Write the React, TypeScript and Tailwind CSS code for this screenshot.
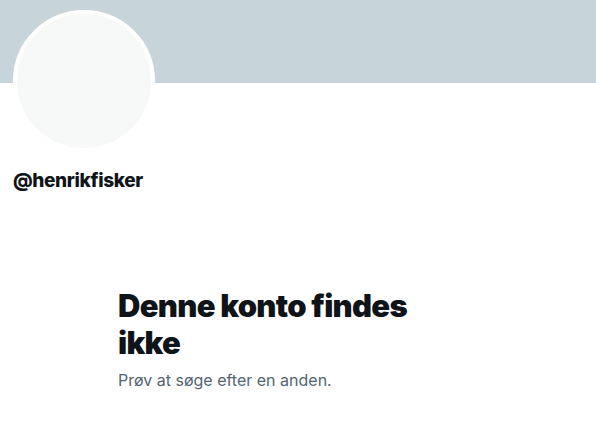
export default function App() {
  return (
    <div
      className="w-[596px] h-[443px] bg-white overflow-hidden"
      style={{ fontFamily: "Inter, 'Liberation Sans', sans-serif" }}
    >
      <div className="h-[83px] bg-[#c7d4da]" />
      <div className="px-[13px]">
        <div className="-mt-[73px] w-[142px] h-[142px] rounded-full border-[4px] border-white bg-[#f7f9f9]" />
        <div className="mt-[17px] text-[19px] leading-[24px] font-extrabold text-[#0f1419] tracking-[-0.35px]">
          @henrikfisker
        </div>
      </div>
      <div className="mx-auto mt-[94px] w-[400px] px-5">
        <h1 className="w-[340px] text-[31px] leading-[37px] font-black text-[#0f1419] tracking-[-0.7px]">
          Denne konto findes ikke
        </h1>
        <p className="mt-[9px] text-[16px] leading-[20px] text-[#536471]">
          Prøv at søge efter en anden.
        </p>
      </div>
    </div>
  );
}
